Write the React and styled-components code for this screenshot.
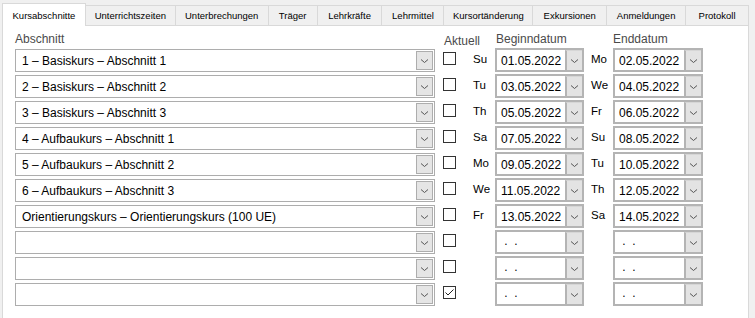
import React from "react";
import styled, { createGlobalStyle } from "styled-components";

const GlobalStyle = createGlobalStyle`
  html, body {
    margin: 0;
    padding: 0;
    background: #f0f0f0;
    font-family: "Liberation Sans", Arial, sans-serif;
  }
`;

const tabs = [
  { label: "Kursabschnitte", width: 84 },
  { label: "Unterrichtszeiten", width: 91 },
  { label: "Unterbrechungen", width: 94 },
  { label: "Träger", width: 50 },
  { label: "Lehrkräfte", width: 66 },
  { label: "Lehrmittel", width: 63 },
  { label: "Kursortänderung", width: 90 },
  { label: "Exkursionen", width: 75 },
  { label: "Anmeldungen", width: 80 },
  { label: "Protokoll", width: 64 },
];

const rows = [
  { name: "1 – Basiskurs – Abschnitt 1", d1: "Su", begin: "01.05.2022", d2: "Mo", end: "02.05.2022" },
  { name: "2 – Basiskurs – Abschnitt 2", d1: "Tu", begin: "03.05.2022", d2: "We", end: "04.05.2022" },
  { name: "3 – Basiskurs – Abschnitt 3", d1: "Th", begin: "05.05.2022", d2: "Fr", end: "06.05.2022" },
  { name: "4 – Aufbaukurs – Abschnitt 1", d1: "Sa", begin: "07.05.2022", d2: "Su", end: "08.05.2022" },
  { name: "5 – Aufbaukurs – Abschnitt 2", d1: "Mo", begin: "09.05.2022", d2: "Tu", end: "10.05.2022" },
  { name: "6 – Aufbaukurs – Abschnitt 3", d1: "We", begin: "11.05.2022", d2: "Th", end: "12.05.2022" },
  { name: "Orientierungskurs – Orientierungskurs (100 UE)", d1: "Fr", begin: "13.05.2022", d2: "Sa", end: "14.05.2022" },
  { name: "", d1: "", begin: "", d2: "", end: "" },
  { name: "", d1: "", begin: "", d2: "", end: "" },
  { name: "", d1: "", begin: "", d2: "", end: "", checked: true },
];

export default function App() {
  return (
    <>
      <GlobalStyle />
      <Page>
        <TabStrip>
          {tabs.map((t, i) => (
            <Tab key={t.label} $w={t.width} $active={i === 0} $first={i === 0}>
              {t.label}
            </Tab>
          ))}
        </TabStrip>
        <Panel>
          <Grid>
            <Heading>Abschnitt</Heading>
            <Heading $col={2} $pl={1} $pt={2}>Aktuell</Heading>
            <Heading $col={4} $pl={1}>Beginndatum</Heading>
            <Heading $col={6}>Enddatum</Heading>
            {rows.map((r, i) => (
              <React.Fragment key={i}>
                <ComboCell>
                  <Combo>
                    <ComboText>{r.name}</ComboText>
                    <DropButton>
                      <Chevron />
                    </DropButton>
                  </Combo>
                </ComboCell>
                <CheckCell>
                  <CheckBox>
                    {r.checked && (
                      <svg width="11" height="11" viewBox="0 0 11 11">
                        <polyline points="1.5,5.5 4,8 9.5,2.5" fill="none" stroke="#222" strokeWidth="1" />
                      </svg>
                    )}
                  </CheckBox>
                </CheckCell>
                <DayLabel>{r.d1}</DayLabel>
                <DateBox>
                  <DateText $empty={!r.begin}>{r.begin || " .  ."}</DateText>
                  <DateButton>
                    <Chevron />
                  </DateButton>
                </DateBox>
                <DayLabel $pl={7}>{r.d2}</DayLabel>
                <DateBox>
                  <DateText $empty={!r.end}>{r.end || " .  ."}</DateText>
                  <DateButton>
                    <Chevron />
                  </DateButton>
                </DateBox>
              </React.Fragment>
            ))}
          </Grid>
        </Panel>
      </Page>
    </>
  );
}

function Chevron() {
  return (
    <svg width="9" height="6" viewBox="0 0 9 6">
      <polyline points="1,1.5 4.5,4.5 8,1.5" fill="none" stroke="#555" strokeWidth="1" />
    </svg>
  );
}

// styles
const Page = styled.div`
  width: 747px;
  height: 315px;
  overflow: hidden;
  padding: 3px 0 0 2px;
`;

const TabStrip = styled.div`
  display: flex;
  align-items: flex-start;
  height: 23px;
  position: relative;
  z-index: 1;
`;

const Tab = styled.div`
  box-sizing: border-box;
  width: ${p => p.$w}px;
  height: ${p => (p.$active ? 23 : 20)}px;
  margin-top: ${p => (p.$active ? 0 : 2)}px;
  margin-left: ${p => (p.$first ? 0 : -1)}px;
  border: 1px solid #d9d9d9;
  border-bottom: none;
  background: ${p => (p.$active ? "#ffffff" : "#f0f0f0")};
  position: relative;
  z-index: ${p => (p.$active ? 2 : 1)};
  display: flex;
  justify-content: center;
  align-items: ${p => (p.$active ? "flex-start" : "center")};
  padding-top: ${p => (p.$active ? 6 : 0)}px;
  font-size: 9.5px;
  color: #000;
  white-space: nowrap;
`;

const Panel = styled.div`
  box-sizing: border-box;
  margin-top: -1px;
  height: 293px;
  background: #ffffff;
  border: 1px solid #d9d9d9;
  border-bottom: none;
  padding: 6px 0 0 12px;
`;

const Grid = styled.div`
  display: grid;
  grid-template-columns: 428px 30px 22px 89px 29px 90px;
  grid-template-rows: 14px;
  grid-auto-rows: 24px;
  row-gap: 2px;
`;

const Heading = styled.div`
  grid-column: ${p => p.$col || 1};
  font-size: 12px;
  line-height: 14px;
  color: #4a4a4a;
  padding-left: ${p => p.$pl || 0}px;
  padding-top: ${p => p.$pt || 0}px;
  white-space: nowrap;
`;

const ComboCell = styled.div`
  grid-column: 1;
  padding-top: 1px;
`;

const Combo = styled.div`
  box-sizing: border-box;
  width: 420px;
  height: 23px;
  border: 1px solid #adadad;
  background: #fff;
  display: flex;
  align-items: center;
  padding: 1px;
`;

const ComboText = styled.span`
  flex: 1;
  padding: 1px 0 0 5px;
  font-size: 12px;
  line-height: 14px;
  color: #000;
  white-space: nowrap;
`;

const DropButton = styled.div`
  box-sizing: border-box;
  width: 17px;
  height: 19px;
  border: 1px solid #adadad;
  background: #e5e5e5;
  display: flex;
  align-items: center;
  justify-content: center;
`;

const CheckCell = styled.div`
  padding: 4px 0 0 0;
`;

const CheckBox = styled.div`
  box-sizing: border-box;
  width: 13px;
  height: 13px;
  border: 1px solid #333;
  background: #fff;
  display: flex;
  align-items: center;
  justify-content: center;
`;

const DayLabel = styled.div`
  font-size: 11.5px;
  line-height: 13px;
  padding-top: 5px;
  padding-left: ${p => p.$pl || 0}px;
  color: #000;
`;

const DateBox = styled.div`
  box-sizing: border-box;
  height: 24px;
  border: 2px solid #b4b4b4;
  background: #fff;
  display: flex;
  align-items: stretch;
`;

const DateText = styled.span`
  flex: 1;
  padding: ${p => (p.$empty ? 2 : 4)}px 0 0 4px;
  font-size: 12px;
  line-height: 14px;
  color: #000;
  white-space: pre;
`;

const DateButton = styled.div`
  box-sizing: border-box;
  width: 17px;
  border-left: 2px solid #b4b4b4;
  border-top: 1px solid #d6d6d6;
  background: #e3e3e3;
  display: flex;
  align-items: center;
  justify-content: center;
`;
